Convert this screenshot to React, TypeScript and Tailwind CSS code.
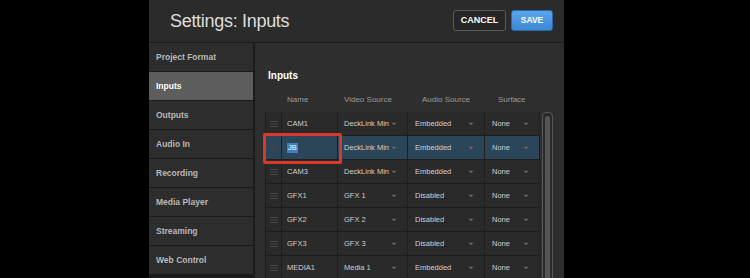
import React from "react";

const menu = [
  "Project Format",
  "Inputs",
  "Outputs",
  "Audio In",
  "Recording",
  "Media Player",
  "Streaming",
  "Web Control",
];

const rows = [
  { name: "CAM1", video: "DeckLink Min", audio: "Embedded" },
  { name: "JB", video: "DeckLink Min", audio: "Embedded", selected: true },
  { name: "CAM3", video: "DeckLink Min", audio: "Embedded" },
  { name: "GFX1", video: "GFX 1", audio: "Disabled" },
  { name: "GFX2", video: "GFX 2", audio: "Disabled" },
  { name: "GFX3", video: "GFX 3", audio: "Disabled" },
  { name: "MEDIA1", video: "Media 1", audio: "Embedded" },
];

const Caret = () => (
  <svg width="6" height="4" viewBox="0 0 6 4" className="shrink-0">
    <path d="M0.5 0.8 L3 3.2 L5.5 0.8 Z" fill="#6a6a6a" />
  </svg>
);

const Handle = () => (
  <svg width="8" height="6" viewBox="0 0 8 6">
    <path d="M0 0.5 H8 M0 3 H8 M0 5.5 H8" stroke="#444" strokeWidth="1" />
  </svg>
);

export default function App() {
  return (
    <div
      className="w-[750px] h-[278px] bg-black overflow-hidden"
      style={{ fontFamily: '"Liberation Sans", Arial, sans-serif' }}
    >
      <div className="ml-[149px] w-[415px] h-full flex flex-col bg-[#1c1c1c]">
        {/* header */}
        <div className="h-[43px] shrink-0 bg-[#2b2b2b] flex items-center pl-[21px] pr-[11px] border-b border-[#1c1c1c]">
          <h1 className="text-[18px] tracking-[-0.3px] text-[#dedede] flex-1">
            Settings: Inputs
          </h1>
          <button className="h-[21px] w-[53px] rounded-[3px] border border-[#5a5a5a] bg-[#262626] text-white text-[9px] font-bold -mt-[1px]">
            CANCEL
          </button>
          <button className="ml-[5px] h-[21px] w-[42px] rounded-[3px] border border-[#2c6aa8] bg-gradient-to-b from-[#5aa6ec] to-[#3c86d4] text-white text-[8.5px] font-bold -mt-[1px]">
            SAVE
          </button>
        </div>

        <div className="flex flex-1 min-h-0">
          {/* sidebar */}
          <div className="w-[104px] flex flex-col gap-[1px] bg-[#1a1a1a]">
            {menu.map((m) => (
              <div
                key={m}
                className={`h-[28px] shrink-0 flex items-center pl-[7px] text-[8.5px] font-bold ${
                  m === "Inputs"
                    ? "bg-[#5d5d5d] text-white"
                    : "bg-[#2d2d2d] text-[#b8b8b8]"
                }`}
              >
                {m}
              </div>
            ))}
          </div>

          {/* content */}
          <div className="ml-[2px] flex-1 bg-[#2e2e2e] pl-[10px] pt-[28px] flex flex-col">
            <h2 className="pl-[3px] text-[10px] font-bold text-white leading-none">
              Inputs
            </h2>
            <div className="flex mt-[13px] h-[12px] items-center text-[8px] text-[#9a9a9a]">
              <div className="w-[17px]" />
              <div className="w-[56px] pl-[5px]">Name</div>
              <div className="w-[70px] pl-[6px]">Video Source</div>
              <div className="w-[77px] pl-[14px]">Audio Source</div>
              <div className="w-[55px] pl-[13px]">Surface</div>
            </div>

            <div className="flex mt-[6px]">
              <div className="w-[275px] flex flex-col">
                {rows.map((r) => (
                  <div
                    key={r.name}
                    className={`relative flex h-[24px] shrink-0 border-b border-[#1e1e1e] text-[7.5px] text-[#cfcfcf] ${
                      r.selected ? "bg-[#2c4659]" : "bg-[#2a2a2a]"
                    }`}
                  >
                    <div className="w-[17px] flex items-center justify-center border-x border-[#1e1e1e]">
                      <Handle />
                    </div>
                    <div className="w-[56px] flex items-center pl-[5px] border-r border-[#1e1e1e]">
                      {r.selected ? (
                        <span className="bg-[#3f80c4] text-white px-[1px] leading-[10px]">
                          {r.name}
                        </span>
                      ) : (
                        r.name
                      )}
                    </div>
                    <div className="w-[70px] flex items-center pl-[6px] pr-[10px] justify-between border-r border-[#1e1e1e]">
                      <span>{r.video}</span>
                      <Caret />
                    </div>
                    <div className="w-[77px] flex items-center pl-[7px] pr-[10px] justify-between border-r border-[#1e1e1e]">
                      <span>{r.audio}</span>
                      <Caret />
                    </div>
                    <div className="w-[55px] flex items-center pl-[7px] pr-[10px] justify-between border-r border-[#1e1e1e]">
                      <span>None</span>
                      <Caret />
                    </div>
                    {r.selected && (
                      <div className="absolute z-10 left-[-2px] top-[-3px] w-[79px] h-[31px] border-[3px] border-[#d8392b] rounded-[2px]" />
                    )}
                  </div>
                ))}
              </div>
              <div className="ml-[2px] w-[11px] h-[170px] rounded-t-[4px] border border-[#575757] bg-[#2a2a2a] flex justify-center pt-[3px]">
                <div className="w-[5px] h-full rounded-t-[3px] bg-[#555]" />
              </div>
            </div>
          </div>
        </div>
      </div>
    </div>
  );
}
